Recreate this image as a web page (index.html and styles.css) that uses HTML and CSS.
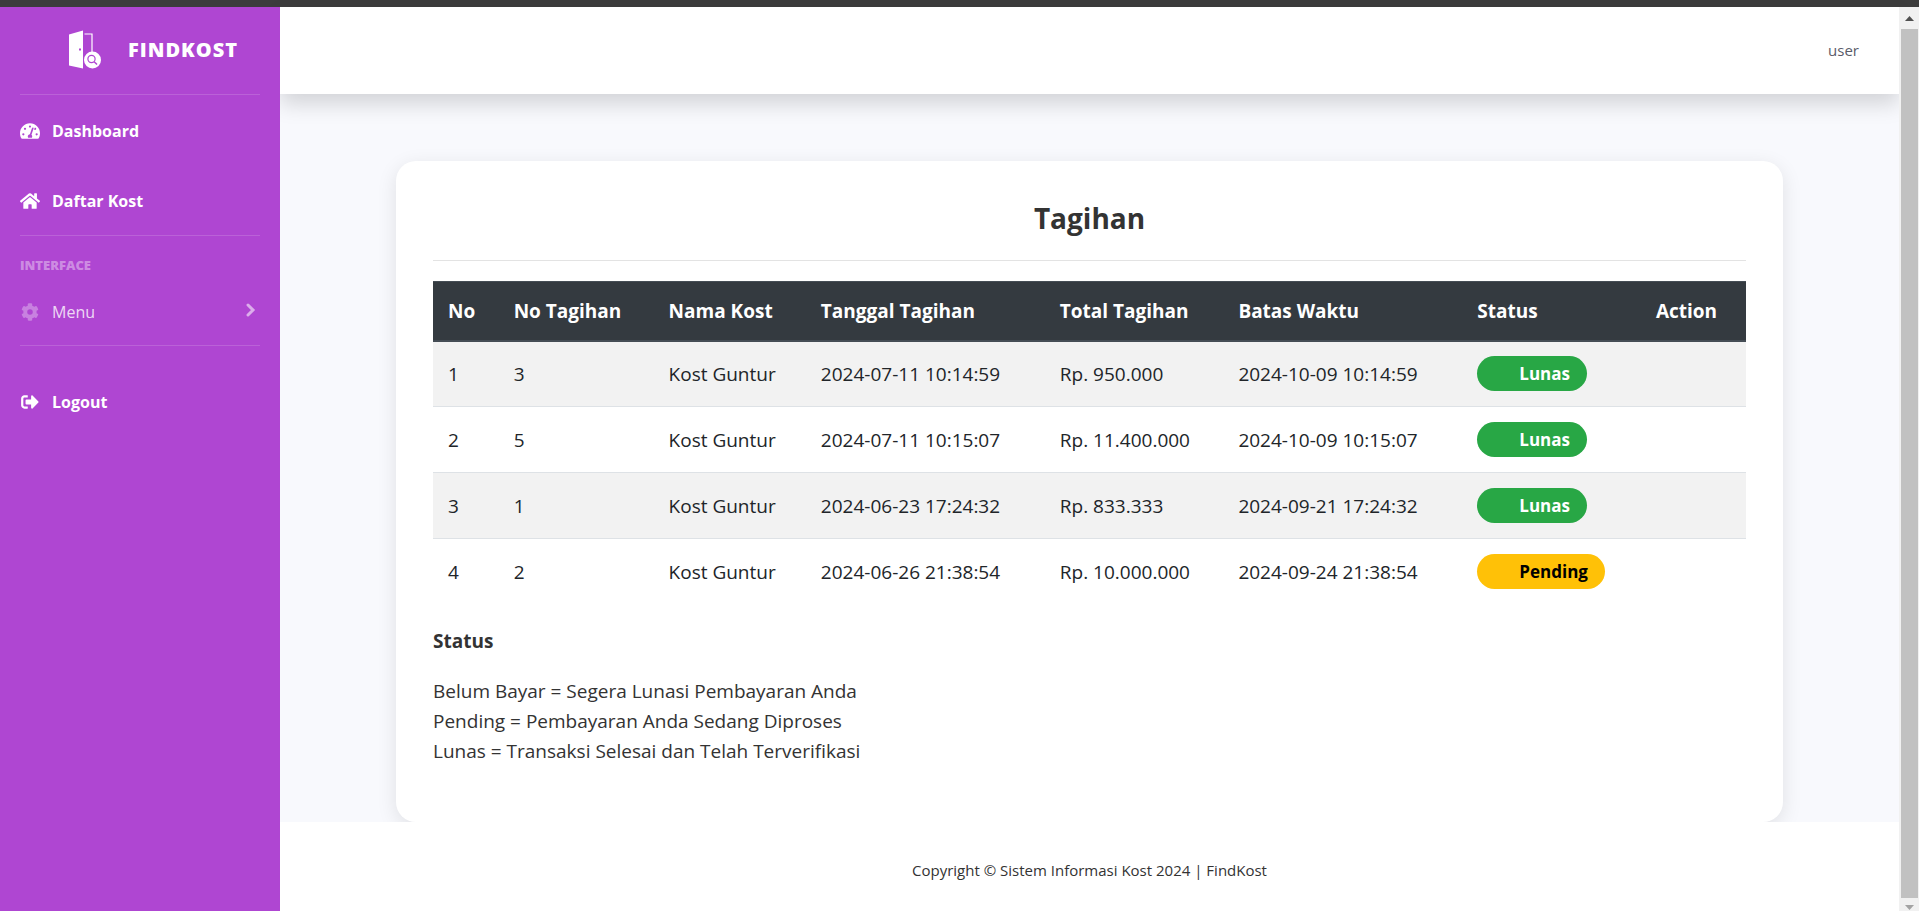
FILE: index.html
```html
<!DOCTYPE html>
<html lang="id">
<head>
<meta charset="utf-8">
<meta name="viewport" content="width=device-width, initial-scale=1">
<title>FindKost - Tagihan</title>
<link rel="stylesheet" href="styles.css">
</head>
<body>
<div class="window-edge"></div>
<div class="shell">
  <nav class="sidebar" aria-label="Menu utama">
    <a class="brand" href="#">
      <svg class="brand-logo" viewBox="0 0 32 39" aria-hidden="true">
        <path d="M0 4.500 14 .5V38.500L0 35.500Z" fill="#fff"/>
        <rect x="10" y="18.500" width="2" height="2" fill="#af46d2"/>
        <path d="M15.500 4H23V22" fill="none" stroke="#fff" stroke-width="1.200"/>
        <circle cx="23.500" cy="30" r="8.500" fill="#fff"/>
        <circle cx="22.500" cy="29" r="3.600" fill="none" stroke="#af46d2" stroke-width="1.200"/>
        <path d="M25.200 31.700 28 34.500" stroke="#af46d2" stroke-width="1.400"/>
      </svg>
      <span>FINDKOST</span>
    </a>
    <hr class="rule">
    <a class="item item-strong item-dashboard" href="#">
      <svg class="icon" viewBox="0 0 576 512" aria-hidden="true"><path fill="currentColor" fill-rule="evenodd" d="M288 32C129 32 0 161 0 320c0 53 14 102 39 145 6 10 16 15 28 15h442c12 0 22-5 28-15 25-43 39-92 39-145C576 161 447 32 288 32zm0 64c15 0 27 10 31 24-5 16-7 33-16 36-5 3-10 4-15 4a32 32 0 1 1 0-64zM96 384a32 32 0 1 1 0-64 32 32 0 0 1 0 64zm48-160a32 32 0 1 1 0-64 32 32 0 0 1 0 64zm247-41-61 184c13 12 22 29 22 49 0 12-3 23-9 32H233c-6-9-9-20-9-32 0-34 27-62 61-64l61-184c10-30 55-15 45 15zm15 32 17-50c26-13 53 6 41 42-13 26-44 21-58 8zm74 169a32 32 0 1 1 0-64 32 32 0 0 1 0 64z"/></svg>
      <span>Dashboard</span>
    </a>
    <a class="item item-strong" href="#">
      <svg class="icon" viewBox="0 0 576 512" aria-hidden="true"><path fill="currentColor" d="M280 148 96 300v164a16 16 0 0 0 16 16h112a16 16 0 0 0 16-16v-96a16 16 0 0 1 16-16h64a16 16 0 0 1 16 16v96a16 16 0 0 0 16 16h112a16 16 0 0 0 16-16V300L296 148a12 12 0 0 0-16 0zm292 103-84-69V44a12 12 0 0 0-12-12h-56a12 12 0 0 0-12 12v72l-90-73a48 48 0 0 0-61 0L4 251a12 12 0 0 0-1 17l25 31a12 12 0 0 0 17 2L280 107a12 12 0 0 1 16 0l235 194a12 12 0 0 0 17-2l25-31a12 12 0 0 0-1-17z"/></svg>
      <span>Daftar Kost</span>
    </a>
    <hr class="rule">
    <h2 class="heading">INTERFACE</h2>
    <button class="item item-menu" type="button" aria-expanded="false">
      <svg class="icon icon-dim" viewBox="0 0 576 512" aria-hidden="true"><path fill="currentColor" transform="translate(32 0)" d="m487 316-43-25c4-23 4-47 0-70l43-25c5-3 7-9 6-14-11-36-30-69-55-96-4-4-10-5-15-2l-43 24c-18-15-38-27-60-35V24c0-6-4-11-9-12-37-8-75-8-110 0-6 1-10 6-10 12v49c-22 8-42 20-60 35L89 84c-5-3-12-2-15 2-25 27-44 60-55 96-2 5 0 11 5 14l43 25c-4 23-4 47 0 70l-43 25c-5 3-7 9-6 14 11 36 30 69 56 96 4 4 10 5 15 2l42-24c18 15 38 27 60 35v49c0 6 4 11 10 12 36 8 74 8 110 0 5-1 9-6 9-12v-49c22-8 42-20 60-35l43 24c5 3 11 2 15-2 25-27 44-60 55-96 1-5-1-11-6-14zM256 336a80 80 0 1 1 0-160 80 80 0 0 1 0 160z"/></svg>
      <span>Menu</span>
      <svg class="chevron" viewBox="0 0 10 14" aria-hidden="true"><path d="M2 2 7 7 2 12" fill="none" stroke="currentColor" stroke-width="3" stroke-linecap="round"/></svg>
    </button>
    <hr class="rule">
    <a class="item item-strong item-logout" href="#">
      <svg class="icon" viewBox="0 0 576 512" aria-hidden="true"><path fill="currentColor" transform="translate(32 0)" d="M497 273 329 441c-15 15-41 4.500-41-17v-96H152c-13 0-24-11-24-24v-96c0-13 11-24 24-24h136V88c0-21 26-32 41-17l168 168c9 9 9 25 0 34zM192 436v-40c0-7-5-12-12-12H96c-18 0-32-14-32-32V160c0-18 14-32 32-32h84c7 0 12-5 12-12V76c0-7-5-12-12-12H96c-53 0-96 43-96 96v192c0 53 43 96 96 96h84c7 0 12-5 12-12z"/></svg>
      <span>Logout</span>
    </a>
  </nav>
  <div class="page">
    <header class="topbar"><a class="user" href="#">user</a></header>
    <main class="content">
      <section class="card">
        <h1 class="title">Tagihan</h1>
        <table class="bills">
          <colgroup><col class="c-no"><col class="c-id"><col class="c-name"><col class="c-date"><col class="c-total"><col class="c-date"><col class="c-total"><col class="c-action"></colgroup>
          <thead><tr><th scope="col">No</th><th scope="col">No Tagihan</th><th scope="col">Nama Kost</th><th scope="col">Tanggal Tagihan</th><th scope="col">Total Tagihan</th><th scope="col">Batas Waktu</th><th scope="col">Status</th><th scope="col">Action</th></tr></thead>
          <tbody>
            <tr><td>1</td><td>3</td><td>Kost Guntur</td><td>2024-07-11 10:14:59</td><td>Rp. 950.000</td><td>2024-10-09 10:14:59</td><td><span class="badge badge-paid">Lunas</span></td><td></td></tr>
            <tr><td>2</td><td>5</td><td>Kost Guntur</td><td>2024-07-11 10:15:07</td><td>Rp. 11.400.000</td><td>2024-10-09 10:15:07</td><td><span class="badge badge-paid">Lunas</span></td><td></td></tr>
            <tr><td>3</td><td>1</td><td>Kost Guntur</td><td>2024-06-23 17:24:32</td><td>Rp. 833.333</td><td>2024-09-21 17:24:32</td><td><span class="badge badge-paid">Lunas</span></td><td></td></tr>
            <tr><td>4</td><td>2</td><td>Kost Guntur</td><td>2024-06-26 21:38:54</td><td>Rp. 10.000.000</td><td>2024-09-24 21:38:54</td><td><span class="badge badge-pending">Pending</span></td><td></td></tr>
          </tbody>
        </table>
        <h2 class="legend-title">Status</h2>
        <p class="legend">Belum Bayar = Segera Lunasi Pembayaran Anda<br>Pending = Pembayaran Anda Sedang Diproses<br>Lunas = Transaksi Selesai dan Telah Terverifikasi</p>
      </section>
    </main>
    <footer class="footer">Copyright © Sistem Informasi Kost 2024 | FindKost</footer>
  </div>
  <div class="scrollbar" aria-hidden="true">
    <svg class="arrow arrow-up" viewBox="0 0 9 5"><path d="M0 5 4.500 0 9 5Z"/></svg>
    <div class="thumb"></div>
    <svg class="arrow arrow-down" viewBox="0 0 9 5"><path d="M0 0 4.500 5 9 0Z"/></svg>
  </div>
</div>
</body>
</html>
```
FILE: styles.css
```css
* { box-sizing: border-box; }

body {
  margin: 0;
  min-height: 100vh;
  display: flex;
  flex-direction: column;
  background: #f8f9fd;
  color: #333;
  font: 19px/30px "Open Sans", "Noto Sans", sans-serif;
}

a { color: inherit; text-decoration: none; }

.window-edge { height: 7px; background: #3c3c3c; }

.shell { flex: 1; display: flex; }

/* Sidebar */
.sidebar {
  position: relative;
  z-index: 1;
  flex: 0 0 280px;
  display: flex;
  flex-direction: column;
  background: #af46d2;
  color: #fff;
  font-size: 16px;
  line-height: 24px;
}

.brand {
  height: 87px;
  display: flex;
  align-items: center;
  gap: 27px;
  padding: 0 0 2px 69px;
  font-size: 20px;
  font-weight: 800;
  letter-spacing: 1px;
}

.brand-logo { width: 32px; height: 39px; }

.rule {
  width: auto;
  height: 1px;
  margin: 0 20px;
  border: 0;
  background: rgba(255, 255, 255, 0.15);
}

.item {
  display: flex;
  align-items: center;
  gap: 12px;
  padding: 24px 20px;
  border: 0;
  background: none;
  color: rgba(255, 255, 255, 0.8);
  font: inherit;
  text-align: left;
}

.item-strong { color: #fff; font-weight: 700; }
.item-dashboard { padding-top: 24px; padding-bottom: 22px; }
.item-dashboard + .item { padding-bottom: 22px; }
.item-menu { padding-top: 25px; padding-bottom: 21px; }
.item-logout { padding-top: 44px; }

.icon { width: 20px; height: 18px; }
.icon-dim { opacity: 0.4; }
.chevron { width: 10px; height: 14px; margin: 0 4px 4px auto; opacity: 0.7; }

.heading {
  margin: 19px 20px 0;
  color: rgba(255, 255, 255, 0.4);
  font-size: 13px;
  line-height: 20px;
  font-weight: 800;
}

/* Page */
.page { flex: 1; min-width: 0; display: flex; flex-direction: column; }

.topbar {
  height: 87px;
  display: flex;
  align-items: center;
  justify-content: flex-end;
  padding: 0 40px 2px;
  background: #fff;
  box-shadow: 0 10px 20px rgba(0, 0, 0, 0.15);
}

.user { color: #5a5c69; font-size: 15px; }

.content { padding: 67px 116px 0; overflow: hidden; }

.card {
  padding: 37px;
  border-radius: 20px;
  background: #fff;
  box-shadow: 0 5px 20px rgba(0, 0, 0, 0.1);
}

.title {
  margin: 0 0 20px;
  padding-bottom: 22px;
  border-bottom: 1px solid #e3e3e3;
  font-size: 28px;
  line-height: 40px;
  font-weight: 700;
  text-align: center;
}

.bills {
  width: 100%;
  border-collapse: collapse;
  table-layout: fixed;
  color: #212529;
}

.c-no { width: 5%; }
.c-id { width: 11.8%; }
.c-name { width: 11.6%; }
.c-date { width: 18.2%; }
.c-total { width: 13.6%; }
.c-action { width: 8%; }

.bills th, .bills td {
  height: 66px;
  padding: 0 15px;
  text-align: left;
  white-space: nowrap;
}

.bills th {
  height: 59px;
  background: #343a40;
  color: #fff;
  border-top: 1px solid #454d55;
  border-bottom: 2px solid #454d55;
}

.bills tbody tr + tr td { border-top: 1px solid #dee2e6; }
.bills tbody tr:nth-child(odd) { background: #f2f2f2; }

.badge {
  display: inline-block;
  padding: 0 17px 0 42px;
  border-radius: 18px;
  font-size: 17px;
  line-height: 35px;
  font-weight: 700;
  vertical-align: middle;
}

.badge-paid { background: #28a745; color: #fff; }
.badge-pending { background: #ffc107; color: #000; }

.legend-title { margin: 21px 0 20px; font-size: 19px; line-height: 30px; }
.legend { margin: 0; padding-bottom: 19px; }

.footer {
  flex: 1;
  padding: 36px 20px 26px;
  background: #fff;
  font-size: 15px;
  line-height: 24px;
  text-align: center;
}

/* Scrollbar */
.scrollbar {
  flex: 0 0 20px;
  position: relative;
  z-index: 1;
  display: flex;
  flex-direction: column;
  align-items: center;
  background: #f1f1f1;
}

.thumb { flex: 1; width: 17px; background: #c1c1c1; }
.arrow { width: 9px; height: 5px; }
.arrow-up { margin: 9px 0 8px; fill: #505050; }
.arrow-down { margin: 7px 0 1px; fill: #a3a3a3; }
```
